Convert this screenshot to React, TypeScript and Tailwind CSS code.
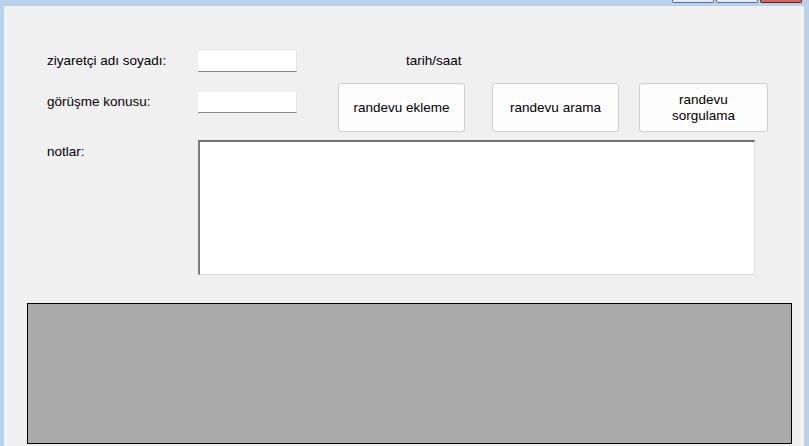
const font = "font-['Liberation_Sans',Arial,sans-serif]";

function TextBox() {
  return <div className="w-[99px] h-[21px] bg-white border-b border-b-[#8a8a8a] border-r border-r-[#e6e6e6]" />;
}

function FormButton({ label, width }: { label: React.ReactNode; width: string }) {
  return (
    <button
      className={`${width} h-[49px] rounded-[3px] border border-[#cfcfcf] bg-[#fdfdfd] text-[13.5px] leading-[16px] text-center flex items-center justify-center`}
    >
      {label}
    </button>
  );
}

export default function App() {
  return (
    <div className={`w-[809px] h-[446px] bg-[#b9d1ea] flex flex-col overflow-hidden text-[13.5px] text-black ${font}`}>
      {/* window caption buttons, only their lower edge shows */}
      <div className="h-[6px] flex justify-end items-start gap-[2px] pr-[7px]">
        <div className="w-[42px] h-[3px] bg-[#dfe9f5] border-x border-b border-[#5d6f8c] rounded-b-[2px]" />
        <div className="w-[42px] h-[3px] bg-[#dfe9f5] border-x border-b border-[#5d6f8c] rounded-b-[2px]" />
        <div className="w-[42px] h-[3px] bg-[#d6675f] border-x border-b border-[#5b2323] rounded-b-[2px]" />
      </div>

      <div className="flex-1 ml-[4px] mr-[5px] bg-[#f0f0f0] flex flex-col">
        <div className="pl-[43px] pt-[45px] flex flex-col">
          <div className="flex items-start h-[21px]">
            <span className="w-[151px] mt-[2px] leading-[15px]">ziyaretçi adı soyadı:</span>
            <TextBox />
            <span className="ml-[109px] mt-[2px] leading-[15px]">tarih/saat</span>
          </div>

          <div className="flex items-start mt-[11px] h-[49px]">
            <span className="w-[151px] mt-[11px] leading-[15px]">görüşme konusu:</span>
            <div className="mt-[9px]">
              <TextBox />
            </div>
            <div className="ml-[41px]">
              <FormButton width="w-[127px]" label="randevu ekleme" />
            </div>
            <div className="ml-[27px]">
              <FormButton width="w-[127px]" label="randevu arama" />
            </div>
            <div className="ml-[20px]">
              <FormButton
                width="w-[129px]"
                label={
                  <>
                    randevu
                    <br />
                    sorgulama
                  </>
                }
              />
            </div>
          </div>

          <div className="flex items-start mt-[8px]">
            <span className="w-[151px] mt-[4px] leading-[15px]">notlar:</span>
            <div className="w-[557px] h-[135px] bg-white border-t-2 border-l-2 border-t-[#6f6f6f] border-l-[#7d7d7d] border-r border-b border-r-[#dcdcdc] border-b-[#dcdcdc]" />
          </div>
        </div>

        <div className="ml-[23px] mt-[28px] w-[765px] h-[141px] border border-black bg-[#ababab]" />
      </div>
    </div>
  );
}
